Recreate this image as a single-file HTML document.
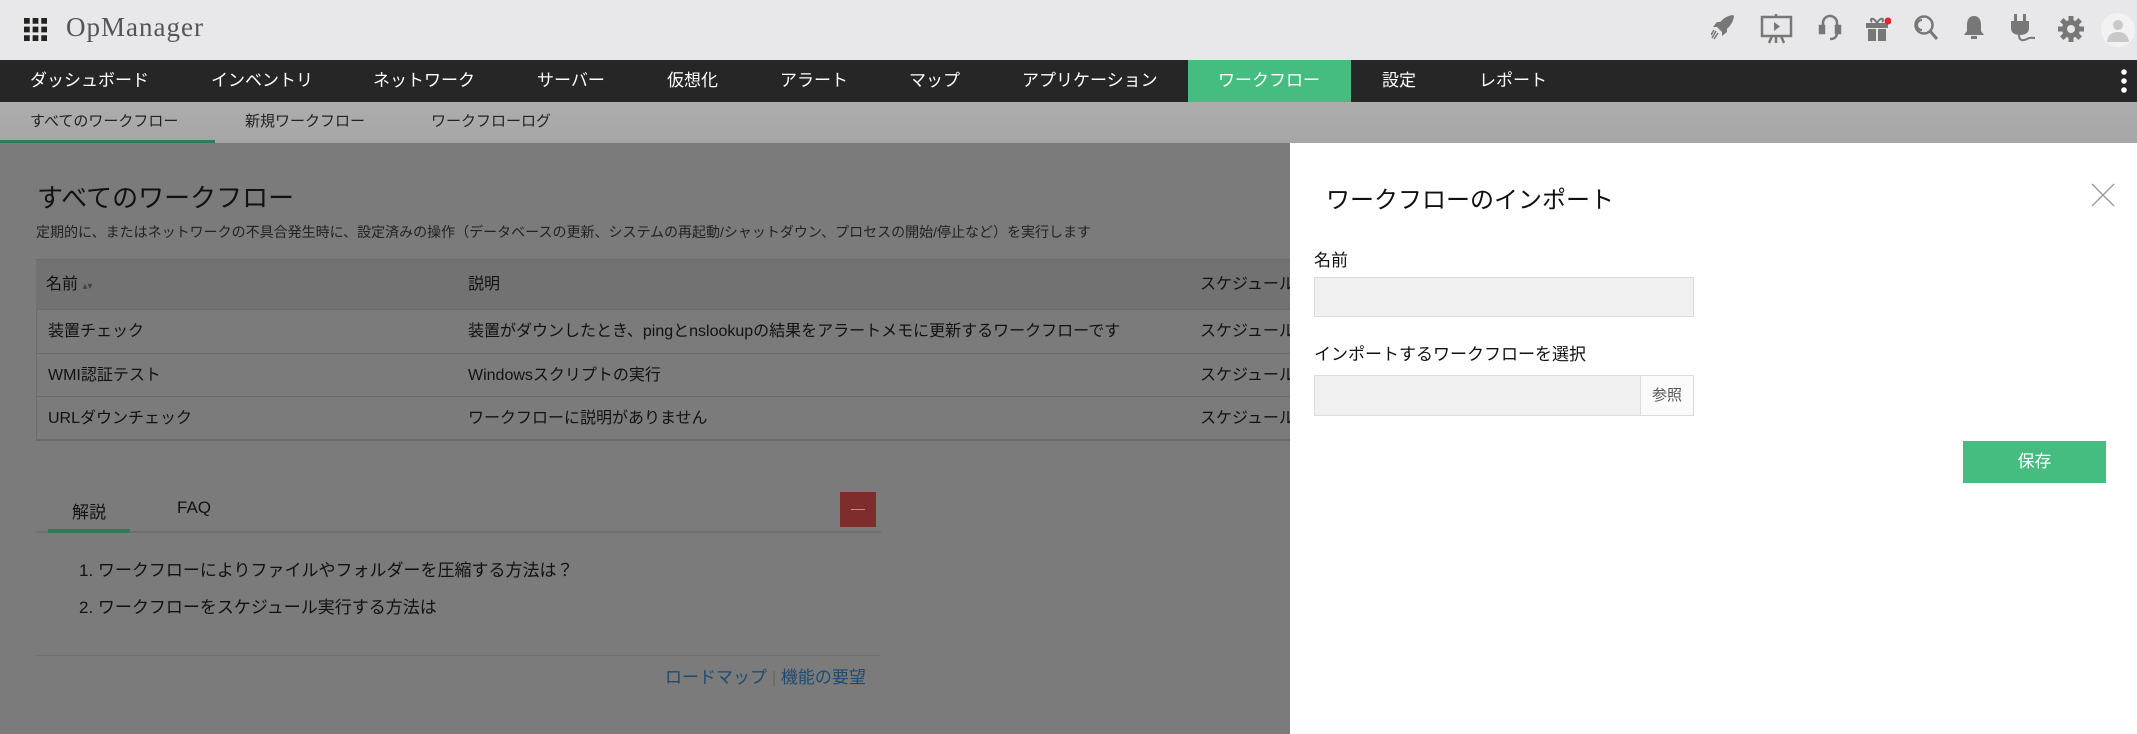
<!DOCTYPE html>
<html><head><meta charset="utf-8"><style>
*{margin:0;padding:0;box-sizing:border-box}
body{width:2137px;height:734px;overflow:hidden;position:relative;font-family:"Liberation Sans","Noto Sans CJK JP",sans-serif;background:#7b7b7b;color:#111}
.abs{position:absolute;white-space:nowrap}
#hdr{position:absolute;left:0;top:0;width:2137px;height:60px;background:#e8e8ea}
#nav{position:absolute;left:0;top:60px;width:2137px;height:42px;background:#262626}
#nav span{position:absolute;top:0;line-height:42px;color:#fff;font-size:17px;white-space:nowrap}
#sub{position:absolute;left:0;top:102px;width:2137px;height:41px;background:linear-gradient(#adadad,#a6a6a6)}
#sub span{position:absolute;line-height:39px;font-size:15px;color:#222;white-space:nowrap}
.ic{position:absolute;top:14px}
.row{position:absolute;left:36px;width:1254px;border-bottom:1px solid #6a6a6a;font-size:16px;overflow:hidden}
.row span{position:absolute;line-height:43px;white-space:nowrap}
#panel{position:absolute;left:1290px;top:143px;width:847px;height:591px;background:#fff}
.inp{position:absolute;background:#f0f0f0;border:1px solid #dcdcdc}
</style></head><body>
<div id="hdr">
 <svg class="abs" style="left:24px;top:18px" width="23" height="23" viewBox="0 0 24 24" fill="#222"><rect x="0" y="0" width="6" height="6"/><rect x="9" y="0" width="6" height="6"/><rect x="18" y="0" width="6" height="6"/><rect x="0" y="9" width="6" height="6"/><rect x="9" y="9" width="6" height="6"/><rect x="18" y="9" width="6" height="6"/><rect x="0" y="18" width="6" height="6"/><rect x="9" y="18" width="6" height="6"/><rect x="18" y="18" width="6" height="6"/></svg>
 <div class="abs" style="left:66px;top:12px;font-size:27px;color:#555;font-family:'Liberation Serif',serif;letter-spacing:1px">OpManager</div>
 <svg class="ic" style="left:1711px" width="24" height="26" viewBox="0 0 24 26" fill="#777"><path d="M22 1 C14 2 9 7 6 13 L11 18 C17 15 22 10 23 2Z"/><path d="M6 13 L2 13 L6 8 L10 8Z M11 18 L11 22 L16 18 L16 14Z"/><path d="M5 17 L1 24 M7 19 L3 25 M3 16 L0 21" stroke="#777" stroke-width="1.5"/></svg>
 <svg class="ic" style="left:1760px" width="33" height="30" viewBox="0 0 33 30" fill="none" stroke="#777" stroke-width="2.5"><rect x="2" y="3" width="29" height="19"/><path d="M16 0V3M16 22V29M9 29L12 22M24 29L21 22"/><path d="M14 8L20 12.5L14 17Z" fill="#777" stroke="none"/></svg>
 <svg class="ic" style="left:1818px" width="24" height="28" viewBox="0 0 24 28" fill="none" stroke="#777" stroke-width="2.5"><path d="M5 14V9a7 7 0 0 1 14 0v5"/><rect x="2" y="12" width="4" height="7" fill="#777"/><rect x="18" y="12" width="4" height="7" fill="#777"/><path d="M19 19c0 4-3 6-7 6"/></svg>
 <svg class="ic" style="left:1865px" width="26" height="28" viewBox="0 0 26 28" fill="#777"><rect x="1" y="9" width="22" height="5"/><rect x="3" y="15" width="8" height="12"/><rect x="13" y="15" width="8" height="12"/><path d="M12 9C8 2 4 5 7 8M12 9C16 2 20 5 17 8" stroke="#777" stroke-width="2" fill="none"/><circle cx="23" cy="7" r="3.5" fill="#e8242c"/></svg>
 <svg class="ic" style="left:1913px" width="26" height="28" viewBox="0 0 26 28" fill="none" stroke="#777" stroke-width="2.5"><circle cx="11" cy="11" r="8.5"/><path d="M17 17L24 25" stroke-width="3"/><path d="M9 6a5 5 0 0 0 0 10" stroke-width="2"/></svg>
 <svg class="ic" style="left:1963px" width="22" height="28" viewBox="0 0 22 28" fill="#777"><path d="M11 2C6 2 4 6 4 11V17L1 21H21L18 17V11C18 6 16 2 11 2Z"/><rect x="8" y="22" width="6" height="3"/></svg>
 <svg class="ic" style="left:2009px" width="28" height="30" viewBox="0 0 28 30" fill="#777"><rect x="5" y="0" width="3" height="7"/><rect x="14" y="0" width="3" height="7"/><path d="M2 7H20V14C20 19 16 21 11 21C6 21 2 19 2 14Z"/><path d="M10 21C10 27 14 27 18 25C21 23 23 24 26 24" stroke="#777" stroke-width="2" fill="none"/></svg>
 <svg class="ic" style="left:2058px;top:16px" width="26" height="26" viewBox="0 0 26 26"><g fill="#777"><circle cx="13" cy="13" r="9"/><rect x="10.5" y="0" width="5" height="26"/><rect x="0" y="10.5" width="26" height="5"/><rect x="10.5" y="0" width="5" height="26" transform="rotate(45 13 13)"/><rect x="10.5" y="0" width="5" height="26" transform="rotate(-45 13 13)"/></g><circle cx="13" cy="13" r="4" fill="#e8e8ea"/></svg>
 <svg class="abs" style="left:2100px;top:12px" width="36" height="36" viewBox="0 0 36 36"><circle cx="18" cy="18" r="17" fill="#f2f2f2"/><circle cx="18" cy="13" r="5" fill="#c8c8c8"/><path d="M7 30C8 22 13 20 18 20C23 20 28 22 29 30Z" fill="#c8c8c8"/></svg>
</div>
<div id="nav">
 <span style="left:30px">ダッシュボード</span>
 <span style="left:211px">インベントリ</span>
 <span style="left:373px">ネットワーク</span>
 <span style="left:537px">サーバー</span>
 <span style="left:667px">仮想化</span>
 <span style="left:780px">アラート</span>
 <span style="left:909px">マップ</span>
 <span style="left:1022px">アプリケーション</span>
 <div class="abs" style="left:1188px;top:0;width:163px;height:42px;background:#45bd80"></div>
 <span style="left:1218px">ワークフロー</span>
 <span style="left:1382px">設定</span>
 <span style="left:1479px">レポート</span>
 <svg class="abs" style="left:2119px;top:9px" width="10" height="24" viewBox="0 0 10 24" fill="#fff"><circle cx="5" cy="3" r="2.8"/><circle cx="5" cy="12" r="2.8"/><circle cx="5" cy="21" r="2.8"/></svg>
</div>
<div id="sub">
 <span style="left:30px">すべてのワークフロー</span>
 <div class="abs" style="left:0;top:38px;width:215px;height:3px;background:#2e7d57"></div>
 <span style="left:245px">新規ワークフロー</span>
 <span style="left:431px">ワークフローログ</span>
</div>

<div class="abs" style="left:37px;top:178px;font-size:26px">すべてのワークフロー</div>
<div class="abs" style="left:36px;top:222px;font-size:14px;color:#222">定期的に、またはネットワークの不具合発生時に、設定済みの操作（データベースの更新、システムの再起動/シャットダウン、プロセスの開始/停止など）を実行します</div>
<div class="abs" style="left:36px;top:259px;width:1254px;height:182px;border:1px solid #6a6a6a;border-right:none"></div>
<div class="row" style="top:259px;height:51px;background:#727272;border-top:1px solid #6a6a6a"><span style="left:10px;line-height:50px">名前 <small style="font-size:10px;color:#444">▴▾</small></span><span style="left:432px;line-height:50px">説明</span><span style="left:1164px;line-height:50px">スケジュール</span></div>
<div class="row" style="top:310px;height:44px"><span style="left:12px">装置チェック</span><span style="left:432px">装置がダウンしたとき、pingとnslookupの結果をアラートメモに更新するワークフローです</span><span style="left:1164px">スケジュール</span></div>
<div class="row" style="top:354px;height:43px"><span style="left:12px">WMI認証テスト</span><span style="left:432px">Windowsスクリプトの実行</span><span style="left:1164px">スケジュール</span></div>
<div class="row" style="top:397px;height:43px"><span style="left:12px">URLダウンチェック</span><span style="left:432px">ワークフローに説明がありません</span><span style="left:1164px">スケジュール</span></div>

<div class="abs" style="left:72px;top:498px;font-size:17px">解説</div>
<div class="abs" style="left:177px;top:498px;font-size:17px">FAQ</div>
<div class="abs" style="left:36px;top:531px;width:845px;height:2px;background:#707070"></div>
<div class="abs" style="left:48px;top:529px;width:82px;height:4px;background:#2e7d57"></div>
<div class="abs" style="left:840px;top:492px;width:36px;height:35px;background:#7f2c2c"></div>
<div class="abs" style="left:851px;top:509px;width:14px;height:1px;background:#c88"></div>
<div class="abs" style="left:79px;top:556px;font-size:17px">1. ワークフローによりファイルやフォルダーを圧縮する方法は？</div>
<div class="abs" style="left:79px;top:593px;font-size:17px">2. ワークフローをスケジュール実行する方法は</div>
<div class="abs" style="left:36px;top:655px;width:845px;height:1px;background:#707070"></div>
<div class="abs" style="left:665px;top:663px;font-size:17px;color:#1e4a70">ロードマップ <span style="color:#666">|</span> 機能の要望</div>

<div id="panel">
 <div class="abs" style="left:36px;top:37px;font-size:24px;color:#111">ワークフローのインポート</div>
 <svg class="abs" style="left:801px;top:40px" width="24" height="24" viewBox="0 0 24 24" stroke="#999" stroke-width="1.3"><path d="M1 1L23 23M23 1L1 23"/></svg>
 <div class="abs" style="left:24px;top:103px;font-size:17px">名前</div>
 <div class="inp" style="left:24px;top:134px;width:380px;height:40px"></div>
 <div class="abs" style="left:24px;top:197px;font-size:17px">インポートするワークフローを選択</div>
 <div class="inp" style="left:24px;top:232px;width:380px;height:41px"></div>
 <div class="abs" style="left:350px;top:233px;width:53px;height:39px;background:#fafafa;border-left:1px solid #dcdcdc;font-size:15px;line-height:39px;text-align:center;color:#555">参照</div>
 <div class="abs" style="left:673px;top:298px;width:143px;height:42px;background:#45bd80;color:#fff;font-size:17px;line-height:42px;text-align:center">保存</div>
</div>
</body></html>
